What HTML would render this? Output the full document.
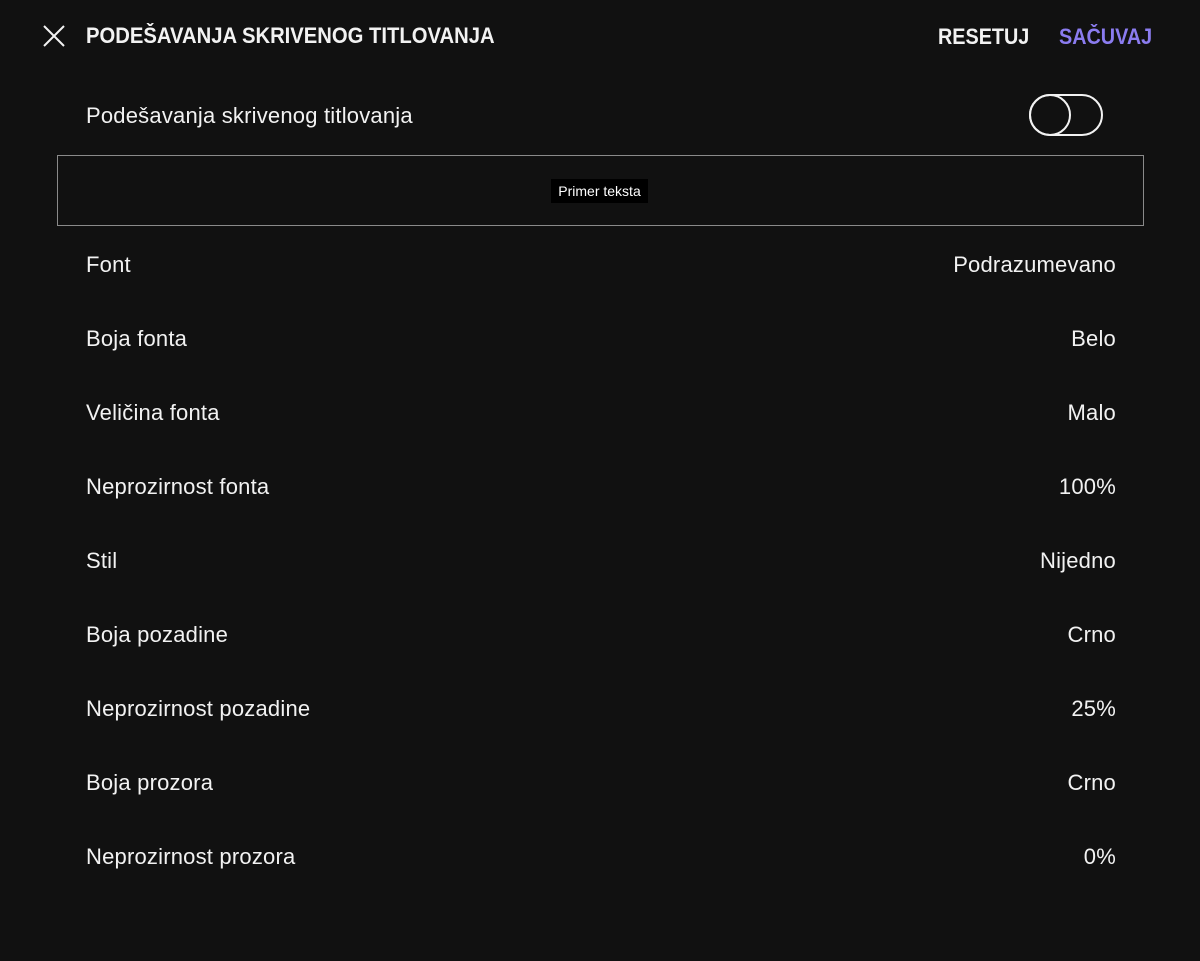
<!DOCTYPE html>
<html><head><meta charset="utf-8"><style>
body{margin:0;width:1200px;height:961px;background:#111;color:#f2f2f2;font-family:"Liberation Sans",sans-serif;position:relative;overflow:hidden}
.a{position:absolute;white-space:nowrap}
.h{font-weight:bold;font-size:22px;line-height:26px;transform-origin:left center}
.row{position:absolute;left:86px;width:1030px;display:flex;justify-content:space-between;font-size:22px;line-height:26px;letter-spacing:0.2px}
</style></head><body>
<svg class="a" style="left:42px;top:24px" width="24" height="24" viewBox="0 0 24 24"><path d="M2 2L22 22M22 2L2 22" stroke="#f2f2f2" stroke-width="2"/></svg>
<div class="a h" style="left:86px;top:23px;transform:scaleX(0.92)">PODEŠAVANJA SKRIVENOG TITLOVANJA</div>
<div class="a h" style="left:938px;top:24px;transform:scaleX(0.9)">RESETUJ</div>
<div class="a h" style="left:1059px;top:24px;color:#8b7cf0;transform:scaleX(0.9)">SAČUVAJ</div>
<div class="row" style="top:103px;width:400px">Podešavanja skrivenog titlovanja</div>
<div class="a" style="left:1029px;top:94px;width:70px;height:38px;border:2px solid #f2f2f2;border-radius:21px"></div>
<div class="a" style="left:1029px;top:94px;width:38px;height:38px;border:2px solid #f2f2f2;border-radius:50%"></div>
<div class="a" style="left:57px;top:155px;width:1085px;height:69px;border:1px solid #8a8a8a"></div>
<div class="a" style="left:551px;top:179px;width:97px;height:24px;background:#000;color:#fff;font-size:14px;line-height:24px;text-align:center">Primer teksta</div>
<div class="row" style="top:252px"><span>Font</span><span>Podrazumevano</span></div>
<div class="row" style="top:326px"><span>Boja fonta</span><span>Belo</span></div>
<div class="row" style="top:400px"><span>Veličina fonta</span><span>Malo</span></div>
<div class="row" style="top:474px"><span>Neprozirnost fonta</span><span>100%</span></div>
<div class="row" style="top:548px"><span>Stil</span><span>Nijedno</span></div>
<div class="row" style="top:622px"><span>Boja pozadine</span><span>Crno</span></div>
<div class="row" style="top:696px"><span>Neprozirnost pozadine</span><span>25%</span></div>
<div class="row" style="top:770px"><span>Boja prozora</span><span>Crno</span></div>
<div class="row" style="top:844px"><span>Neprozirnost prozora</span><span>0%</span></div>
</body></html>
